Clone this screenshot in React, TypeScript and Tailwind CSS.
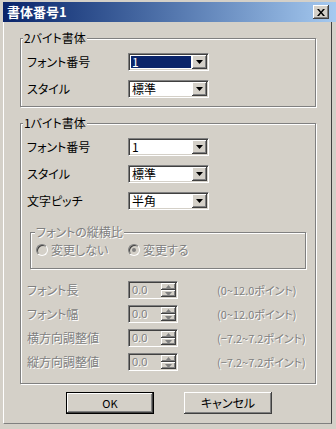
import React from 'react';

const font = "font-['Noto_Sans_CJK_JP','Liberation_Sans',sans-serif] [font-feature-settings:'palt']";
const raised =
  'bg-[#d4d0c8] shadow-[inset_-1px_-1px_0_#404040,inset_1px_1px_0_#ffffff,inset_-2px_-2px_0_#808080,inset_2px_2px_0_#d4d0c8]';
const sunken =
  'border border-t-[#808080] border-l-[#808080] border-r-white border-b-white shadow-[inset_1px_1px_0_#404040,inset_-1px_-1px_0_#d4d0c8]';
const disabledText = 'text-[#808080] [text-shadow:1px_1px_0_#ffffff]';

const Arrow = ({ color = '#000' }: { color?: string }) => (
  <svg width="7" height="4" viewBox="0 0 7 4">
    <path d="M0 0h7L3.5 4z" fill={color} />
  </svg>
);

const Combo = ({ value, selected }: { value: string; selected?: boolean }) => (
  <div className={`flex w-[81px] h-[18px] bg-white ${sunken} p-[1px]`}>
    <div className="flex-1 flex items-center pl-[1px] pr-[1px]">
      <span
        className={`w-full h-[12px] flex items-center pl-[1px] text-[12px] leading-[12px] ${
          selected ? 'bg-[#0a246a] text-white' : 'text-black'
        }`}
      >
        {value}
      </span>
    </div>
    <div className={`w-[15px] h-full flex items-center justify-center ${raised}`}>
      <Arrow />
    </div>
  </div>
);

const Spin = () => (
  <div className={`flex w-[50px] h-[18px] bg-[#d4d0c8] ${sunken} p-[1px]`}>
    <div className={`flex-1 flex items-center pl-[2px] text-[11px] font-['Liberation_Sans',sans-serif] ${disabledText}`}>
      0.0
    </div>
    <div className="w-[15px] flex flex-col">
      <div className={`flex-1 flex items-center justify-center ${raised}`}>
        <svg width="5" height="3" viewBox="0 0 5 3">
          <path d="M0 3h5L2.5 0z" fill="#808080" />
        </svg>
      </div>
      <div className={`flex-1 flex items-center justify-center ${raised}`}>
        <Arrow color="#808080" />
      </div>
    </div>
  </div>
);

const Radio = ({ checked }: { checked?: boolean }) => (
  <span className="w-[12px] h-[12px] rounded-full flex items-center justify-center border border-t-[#808080] border-l-[#808080] border-r-white border-b-white bg-[#d4d0c8] shadow-[inset_1px_1px_0_#404040]">
    {checked && <span className="w-[4px] h-[4px] rounded-full bg-[#808080]" />}
  </span>
);

const groupBox = 'border border-[#808080] shadow-[1px_1px_0_#ffffff,inset_1px_1px_0_#ffffff] p-0 m-0';

const ComboRow = ({ label, value, selected }: { label: string; value: string; selected?: boolean }) => (
  <div className="flex items-center h-[18px]">
    <span className="w-[101px] text-[12px] text-black">{label}</span>
    <Combo value={value} selected={selected} />
  </div>
);

const SpinRow = ({ label, range }: { label: string; range: string }) => (
  <div className="flex items-center h-[18px]">
    <span className={`w-[101px] text-[12px] ${disabledText}`}>{label}</span>
    <Spin />
    <span className={`ml-[39px] text-[11px] ${disabledText}`}>{range}</span>
  </div>
);

export default function App() {
  return (
    <div className={`w-[336px] h-[429px] bg-[#d4d0c8] overflow-hidden pt-[2px] ${font}`}>
      {/* タイトルバー */}
      <div className="ml-[3px] h-[20px] flex items-center justify-between pl-[4px] pr-[7px] bg-gradient-to-r from-[#0a246a] to-[#a6caf0]">
        <span className="text-white font-bold text-[13px] leading-[14px]">書体番号1</span>
        <div className={`w-[16px] h-[14px] flex items-center justify-center ${raised}`}>
          <svg width="8" height="7" viewBox="0 0 8 7">
            <path d="M0 0h2l2 2.5L6 0h2L5 3.5 8 7H6L4 4.5 2 7H0l3-3.5z" fill="#000" />
          </svg>
        </div>
      </div>

      <div className="ml-[3px] w-[329px] h-[402px] border-l border-l-white border-r border-r-[#404040] border-b border-b-[#808080] pt-[9px]">
        {/* 2バイト書体 */}
        <fieldset className={`ml-[16px] w-[296px] ${groupBox}`}>
          <legend className="ml-[2px] px-[1px] bg-[#d4d0c8] text-[12px] leading-[14px] text-black">2バイト書体</legend>
          <div className="pl-[6px] pt-[8px] pb-[8px] flex flex-col gap-[9px]">
            <ComboRow label="フォント番号" value="1" selected />
            <ComboRow label="スタイル" value="標準" />
          </div>
        </fieldset>

        {/* 1バイト書体 */}
        <fieldset className={`mt-[9px] ml-[16px] w-[296px] ${groupBox}`}>
          <legend className="ml-[2px] px-[1px] bg-[#d4d0c8] text-[12px] leading-[14px] text-black">1バイト書体</legend>
          <div className="pl-[6px] pt-[8px] flex flex-col gap-[9px]">
            <ComboRow label="フォント番号" value="1" />
            <ComboRow label="スタイル" value="標準" />
            <ComboRow label="文字ピッチ" value="半角" />
          </div>

          <fieldset className={`mt-[15px] ml-[9px] w-[276px] ${groupBox}`}>
            <legend className={`ml-[4px] px-[1px] bg-[#d4d0c8] text-[12px] leading-[14px] ${disabledText}`}>
              フォントの縦横比
            </legend>
            <div className="pl-[5px] pt-[4px] pb-[11px] flex items-center h-[14px] box-content">
              <Radio />
              <span className={`ml-[3px] w-[77px] text-[12px] ${disabledText}`}>変更しない</span>
              <Radio checked />
              <span className={`ml-[3px] text-[12px] ${disabledText}`}>変更する</span>
            </div>
          </fieldset>

          <div className="pl-[6px] pt-[12px] pb-[12px] flex flex-col gap-[6px]">
            <SpinRow label="フォント長" range="(0~12.0ポイント)" />
            <SpinRow label="フォント幅" range="(0~12.0ポイント)" />
            <SpinRow label="横方向調整値" range="(−7.2~7.2ポイント)" />
            <SpinRow label="縦方向調整値" range="(−7.2~7.2ポイント)" />
          </div>
        </fieldset>

        {/* ボタン */}
        <div className="mt-[8px] flex gap-[30px] pl-[62px]">
          <button className="w-[88px] h-[22px] border border-black p-0">
            <span className={`w-full h-full flex items-center justify-center text-[11px] text-black ${raised}`}>OK</span>
          </button>
          <button className={`w-[88px] h-[22px] flex items-center justify-center text-[12px] text-black ${raised}`}>
            キャンセル
          </button>
        </div>
      </div>
    </div>
  );
}
